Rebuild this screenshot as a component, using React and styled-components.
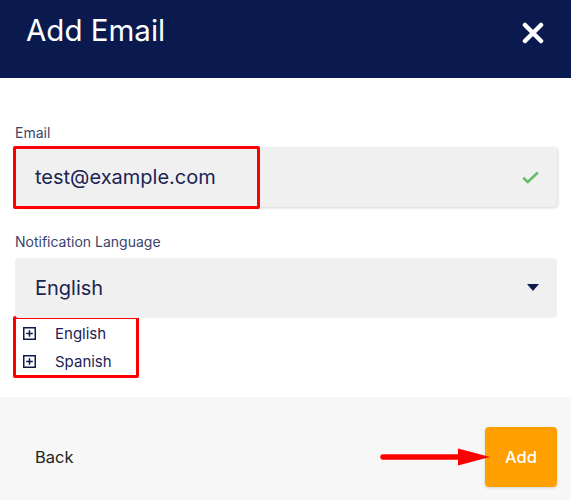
import React from "react";
import styled, { createGlobalStyle } from "styled-components";

const Global = createGlobalStyle`
  html, body { margin: 0; padding: 0; background: #ffffff; }
  body { font-family: Inter, Roboto, "Liberation Sans", sans-serif; }
  * { box-sizing: border-box; }
`;

const Modal = styled.div`
  width: 571px;
  height: 500px;
  display: flex;
  flex-direction: column;
  background: #fff;
  overflow: hidden;
`;

const Header = styled.header`
  height: 78px;
  flex: none;
  background: #0a1a4e;
  display: flex;
  align-items: flex-start;
  justify-content: space-between;
  padding: 12px 27px 0 26px;
`;

const Title = styled.h1`
  margin: 0;
  font-size: 29.5px;
  line-height: 36px;
  font-weight: 400;
  color: #ffffff;
`;

const CloseButton = styled.button`
  border: 0;
  background: transparent;
  padding: 0;
  margin-top: 10px;
  width: 22px;
  height: 22px;
  display: flex;
  cursor: pointer;
`;

const Body = styled.main`
  height: 319px;
  flex: none;
  padding: 45px 14px 0 15px;
  display: flex;
  flex-direction: column;
`;

const Label = styled.label`
  font-size: 14px;
  line-height: 20px;
  color: #3b4469;
  margin-bottom: ${(p) => p.$gap || 4}px;
`;

const Field = styled.div`
  position: relative;
  height: 60px;
  flex: none;
  background: #f0f0f0;
  border-radius: 4px;
  display: flex;
  align-items: center;
  justify-content: space-between;
  padding: 0 18px 0 20px;
  font-size: 20px;
  color: #1b2454;
  box-shadow: ${(p) => (p.$raised ? "1px 1px 3px rgba(0,0,0,0.16)" : "none")};
  margin-bottom: ${(p) => p.$mb || 0}px;
`;

const Highlight = styled.div`
  position: absolute;
  left: -2px;
  top: -1px;
  width: 247px;
  height: 63px;
  border: 3px solid #ff0000;
  border-radius: 2px;
  pointer-events: none;
`;

const OptionList = styled.ul`
  list-style: none;
  margin: -2px 0 0 -2px;
  padding: 0 0 0 7px;
  width: 126px;
  border: 3px solid #ff0000;
  border-radius: 2px;
`;

const Option = styled.li`
  height: 28px;
  display: flex;
  align-items: center;
  gap: 19px;
  font-size: 15px;
  color: #1b2454;
`;

const Footer = styled.footer`
  flex: 1;
  background: #f7f7f7;
  display: flex;
  align-items: flex-start;
  justify-content: space-between;
  padding: 30px 14px 0 35px;
`;

const BackButton = styled.button`
  border: 0;
  background: transparent;
  padding: 0;
  height: 60px;
  font-family: inherit;
  font-size: 16.5px;
  color: #222;
  cursor: pointer;
`;

const AddWrap = styled.div`
  position: relative;
`;

const AddButton = styled.button`
  width: 72px;
  height: 60px;
  border: 0;
  border-radius: 4px;
  background: #ffa000;
  color: #fff;
  font-family: inherit;
  font-size: 16.5px;
  font-weight: 500;
  box-shadow: 0 1px 3px rgba(0,0,0,0.15);
  cursor: pointer;
`;

const Arrow = styled.svg`
  position: absolute;
  left: -105px;
  top: 20px;
  pointer-events: none;
`;

const PlusBox = () => (
  <svg width="13" height="13" viewBox="0 0 13 13">
    <rect x="0.75" y="0.75" width="11.5" height="11.5" fill="none" stroke="#0d1b4c" strokeWidth="1.5" />
    <path d="M6.5 3.2V9.8M3.2 6.5H9.8" stroke="#0d1b4c" strokeWidth="1.5" />
  </svg>
);

export default function App() {
  return (
    <>
      <Global />
      <Modal>
        <Header>
          <Title>Add Email</Title>
          <CloseButton aria-label="Close">
            <svg width="22" height="22" viewBox="0 0 22 22">
              <path d="M3 3L19 19M19 3L3 19" stroke="#fff" strokeWidth="4.5" strokeLinecap="round" />
            </svg>
          </CloseButton>
        </Header>
        <Body>
          <Label>Email</Label>
          <Field $raised $mb={25}>
            <span>test@example.com</span>
            <svg width="17" height="13" viewBox="0 0 17 13">
              <path d="M1.2 6.8L5.8 11L15.8 1.5" fill="none" stroke="#66bb6a" strokeWidth="2.6" />
            </svg>
            <Highlight />
          </Field>
          <Label $gap={6}>Notification Language</Label>
          <Field>
            <span>English</span>
            <svg width="12" height="8" viewBox="0 0 12 8">
              <path d="M0 0H12L6 7Z" fill="#0d1b4c" />
            </svg>
          </Field>
          <OptionList>
            <Option>
              <PlusBox />
              English
            </Option>
            <Option>
              <PlusBox />
              Spanish
            </Option>
          </OptionList>
        </Body>
        <Footer>
          <BackButton>Back</BackButton>
          <AddWrap>
            <AddButton>Add</AddButton>
            <Arrow width="112" height="20" viewBox="0 0 112 20">
              <path d="M3 10H80" stroke="#ff0000" strokeWidth="5.5" strokeLinecap="round" />
              <path d="M78 1.5L110 10L78 18.5Z" fill="#ff0000" />
            </Arrow>
          </AddWrap>
        </Footer>
      </Modal>
    </>
  );
}
